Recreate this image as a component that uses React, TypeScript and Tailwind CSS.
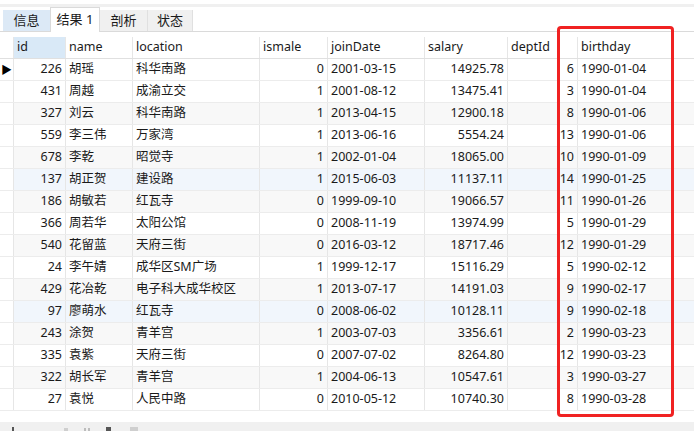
import React from 'react';

type Row = [number, string, string, number, string, string, number, string];

const rows: Row[] = [
  [226, '胡瑶', '科华南路', 0, '2001-03-15', '14925.78', 6, '1990-01-04'],
  [431, '周越', '成渝立交', 1, '2001-08-12', '13475.41', 3, '1990-01-04'],
  [327, '刘云', '科华南路', 1, '2013-04-15', '12900.18', 8, '1990-01-06'],
  [559, '李三伟', '万家湾', 1, '2013-06-16', '5554.24', 13, '1990-01-06'],
  [678, '李乾', '昭觉寺', 1, '2002-01-04', '18065.00', 10, '1990-01-09'],
  [137, '胡正贺', '建设路', 1, '2015-06-03', '11137.11', 14, '1990-01-25'],
  [186, '胡敏若', '红瓦寺', 0, '1999-09-10', '19066.57', 11, '1990-01-26'],
  [366, '周若华', '太阳公馆', 0, '2008-11-19', '13974.99', 5, '1990-01-29'],
  [540, '花留蓝', '天府三街', 0, '2016-03-12', '18717.46', 12, '1990-01-29'],
  [24, '李午婧', '成华区SM广场', 1, '1999-12-17', '15116.29', 5, '1990-02-12'],
  [429, '花冶乾', '电子科大成华校区', 1, '2013-07-17', '14191.03', 9, '1990-02-17'],
  [97, '廖萌水', '红瓦寺', 0, '2008-06-02', '10128.11', 9, '1990-02-18'],
  [243, '涂贺', '青羊宫', 1, '2003-07-03', '3356.61', 2, '1990-03-23'],
  [335, '袁紫', '天府三街', 0, '2007-07-02', '8264.80', 12, '1990-03-23'],
  [322, '胡长军', '青羊宫', 1, '2004-06-13', '10547.61', 3, '1990-03-27'],
  [27, '袁悦', '人民中路', 0, '2010-05-12', '10740.30', 8, '1990-03-28'],
];

// 列宽（含右边框）
const cell = 'h-full border-r border-[#e6e6e6] flex items-center whitespace-nowrap overflow-hidden';

const rowBg = (i: number) => {
  if (i === 5 || i === 11) return 'bg-[#f1f6fc]';
  if (i % 2 === 0 && i !== 0) return 'bg-[#f8f8f8]';
  return 'bg-white';
};

export default function App() {
  return (
    <div
      className="relative w-[694px] h-[431px] overflow-hidden bg-white text-[12.5px] text-[#1a1a1a]"
      style={{ fontFamily: '"Noto Sans", "Noto Sans CJK SC", sans-serif' }}
    >
      {/* 顶部条 */}
      <div className="h-[4px]" />
      <div className="h-[3px] bg-[#f0f0f0]" />

      {/* 标签页 */}
      <div className="flex items-end h-[25px] border-b border-[#dadada] pl-[3px] text-[13px]">
        <div className="w-[47px] h-[21px] bg-[#dce9f6] flex items-center justify-center">信息</div>
        <div className="w-[50px] h-[25px] -mb-px bg-white border border-b-0 border-[#dadada] flex items-center justify-center">
          结果 1
        </div>
        <div className="w-[47px] h-[21px] bg-[#f0f0f0] flex items-center justify-center">剖析</div>
        <div className="w-[46px] h-[21px] bg-[#f0f0f0] border-l border-r border-[#e0e0e0] flex items-center justify-center">
          状态
        </div>
      </div>

      <div className="h-[5px]" />

      {/* 表头 */}
      <div className="flex h-[22px] border-b border-[#e0e0e0]">
        <div className={`${cell} w-[14px]`} />
        <div className={`${cell} w-[52px] bg-[#d9e9f7] pl-[3px]`}>id</div>
        <div className={`${cell} w-[67px] pl-[3px]`}>name</div>
        <div className={`${cell} w-[127px] pl-[3px]`}>location</div>
        <div className={`${cell} w-[68px] pl-[3px]`}>ismale</div>
        <div className={`${cell} w-[97px] pl-[3px]`}>joinDate</div>
        <div className={`${cell} w-[83px] pl-[3px]`}>salary</div>
        <div className={`${cell} w-[70px] pl-[3px]`}>deptId</div>
        <div className={`${cell} w-[96px] pl-[3px]`}>birthday</div>
      </div>

      {/* 数据行 */}
      {rows.map((r, i) => (
        <div key={r[0]} className={`flex h-[22px] border-b border-[#ececec] ${rowBg(i)}`}>
          <div className={`${cell} w-[14px] bg-white justify-center`}>
            {i === 0 && <span className="text-[11px] leading-none text-black">▶</span>}
          </div>
          <div className={`${cell} w-[52px] justify-end pr-[3px]`}>{r[0]}</div>
          <div className={`${cell} w-[67px] pl-[3px]`}>{r[1]}</div>
          <div className={`${cell} w-[127px] pl-[3px]`}>{r[2]}</div>
          <div className={`${cell} w-[68px] justify-end pr-[3px]`}>{r[3]}</div>
          <div className={`${cell} w-[97px] pl-[3px]`}>{r[4]}</div>
          <div className={`${cell} w-[83px] justify-end pr-[3px]`}>{r[5]}</div>
          <div className={`${cell} w-[70px] justify-end pr-[3px]`}>{r[6]}</div>
          <div className={`${cell} w-[96px] pl-[3px]`}>{r[7]}</div>
        </div>
      ))}

      {/* 底部工具栏 */}
      <div className="absolute left-0 right-0 bottom-0 h-[9px] bg-[#f0f0f0]">
        <div className="absolute left-[12px] top-[5px] w-[2px] h-[4px] bg-[#555]" />
        <div className="absolute left-[64px] top-[6px] w-[4px] h-[3px] bg-[#cfcfcf]" />
        <div className="absolute left-[84px] top-[6px] w-[2px] h-[3px] bg-[#bdbdbd]" />
        <div className="absolute left-[88px] top-[6px] w-[2px] h-[3px] bg-[#bdbdbd]" />
        <div className="absolute left-[106px] top-[5px] w-[5px] h-[4px] bg-[#555]" />
        <div className="absolute left-[130px] top-[5px] w-[8px] h-[4px] bg-[#cfcfcf]" />
      </div>

      {/* 红色标注框 */}
      <div className="absolute left-[557px] top-[26px] w-[117px] h-[391px] border-[3px] border-[#f02222] rounded-[4px]" />
    </div>
  );
}
